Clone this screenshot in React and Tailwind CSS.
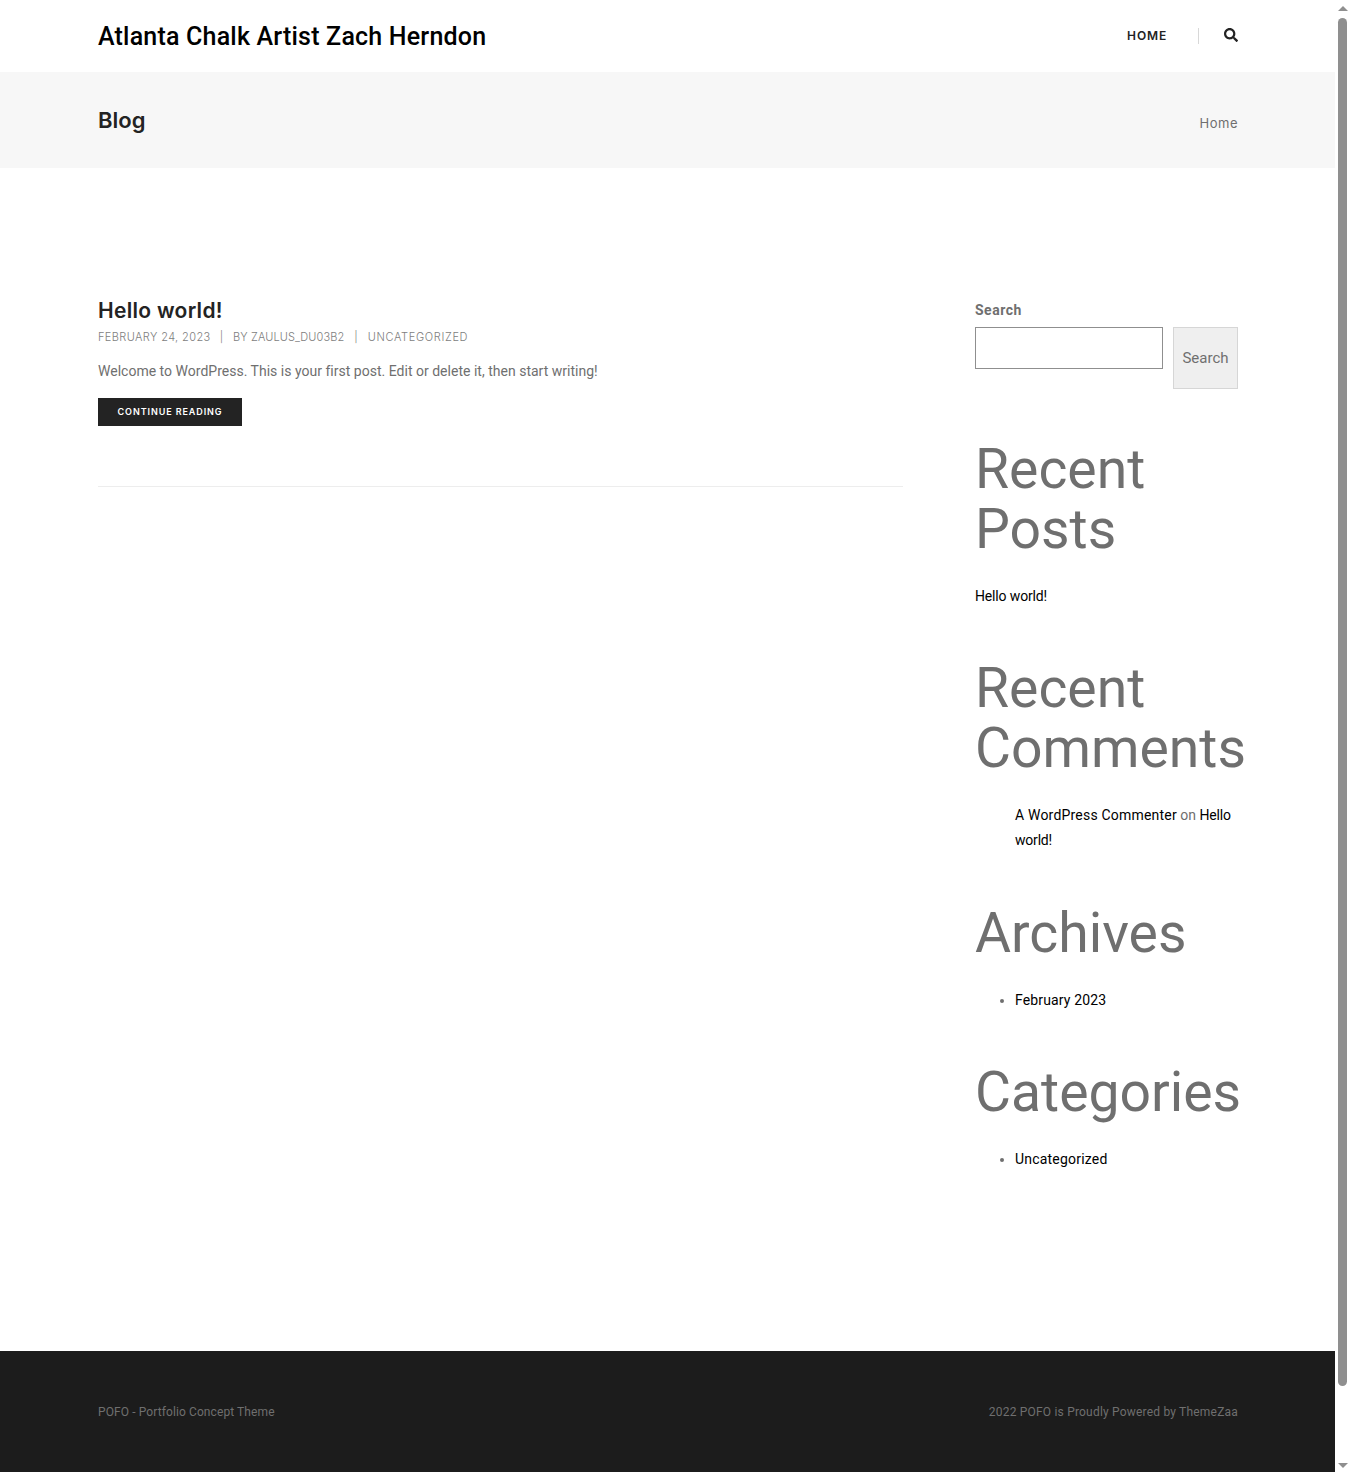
import React from 'react'
import { FaSearch } from 'react-icons/fa'

const WidgetTitle = ({ children, className = '' }) => (
  <h2 className={`text-[55.3px] leading-[60px] font-normal text-[#6f6f6f] ${className}`}>{children}</h2>
)

const Scrollbar = () => (
  <div className="w-[15px] shrink-0 bg-white flex flex-col items-center">
    <div className="mt-[6px] w-0 h-0 border-x-[5px] border-x-transparent border-b-[5px] border-b-[#8f8f8f]" />
    <div className="mt-[7px] w-[9px] h-[1368px] rounded-full bg-[#8f8f8f]" />
    <div className="mt-auto mb-[4px] w-0 h-0 border-x-[5px] border-x-transparent border-t-[5px] border-t-[#8f8f8f]" />
  </div>
)

const App = () => {
  return (
    <div className="flex h-[1472px] bg-white overflow-hidden text-[14px] text-[#6f6f6f] [font-family:Roboto,sans-serif]">
      <div className="flex-1 min-w-0 flex flex-col">
        {/* Header */}
        <header className="h-[72px] shrink-0 pl-[98px] pr-[97px] flex items-center justify-between">
          <div className="mt-[2px] text-[25px] leading-[32px] font-medium tracking-[0.2px] text-black">Atlanta Chalk Artist Zach Herndon</div>
          <div className="flex items-center">
            <span className="text-[12px] font-semibold text-[#232323] tracking-[0.85px] [font-family:Inter,sans-serif]">HOME</span>
            <span className="ml-[31px] mr-[25px] w-px h-[16px] bg-[#d8d8d8]" />
            <FaSearch className="w-[14px] h-[14px] text-[#232323] mb-[2px]" />
          </div>
        </header>

        {/* Page title */}
        <div className="h-[96px] shrink-0 pl-[98px] pr-[97px] bg-[#f7f7f7] flex items-center justify-between">
          <h1 className="text-[22px] font-semibold text-[#232323] [font-family:Inter,sans-serif]">Blog</h1>
          <span className="text-[13px] tracking-[0.5px] text-[#6f6f6f] mt-[7px] [font-family:Inter,sans-serif]">Home</span>
        </div>

        {/* Content */}
        <main className="flex-1 pl-[98px] pr-[97px] pt-[130px] flex justify-between">
          <div className="w-[805px]">
            <h2 className="text-[21px] leading-[26px] font-semibold tracking-[0.3px] text-[#232323] [font-family:Inter,sans-serif]">Hello world!</h2>
            <div className="mt-[3px] flex text-[11px] leading-[20px] font-light text-[#7d7d7d] [font-family:Inter,sans-serif]">
              <span className="tracking-[0.4px]">FEBRUARY 24, 2023</span>
              <span className="ml-[9px] mr-[10px]">|</span>
              <span className="tracking-[0.1px]">BY ZAULUS_DU03B2</span>
              <span className="mx-[10px]">|</span>
              <span className="tracking-[0.65px]">UNCATEGORIZED</span>
            </div>
            <p className="mt-[12px] leading-[25px] tracking-[0.012px]">Welcome to WordPress. This is your first post. Edit or delete it, then start writing!</p>
            <button className="mt-[14px] block w-[144px] h-[28px] bg-[#232323] text-white text-[9px] font-semibold tracking-[0.9px] [font-family:Inter,sans-serif]">CONTINUE READING</button>
            <div className="mt-[60px] h-px bg-[#ededed]" />
          </div>

          <aside className="w-[263px]">
            <div className="mt-[2px] text-[14px] leading-[20px] font-bold tracking-[0.5px] text-[#6f6f6f]">Search</div>
            <div className="mt-[7px] flex items-start">
              <input className="w-[188px] h-[42px] border border-[#8f8f8f] bg-white" />
              <button className="ml-[10px] w-[65px] h-[62px] border border-[#d6d6d6] bg-[#efefef] text-[15px] pt-[1px] text-[#6f6f6f]">Search</button>
            </div>

            <WidgetTitle className="mt-[51px]">Recent<br />Posts</WidgetTitle>
            <a className="mt-[24px] block leading-[25px] tracking-[-0.15px] text-black">Hello world!</a>

            <WidgetTitle className="mt-[50px]">Recent<br />Comments</WidgetTitle>
            <p className="mt-[24px] pl-[40px] leading-[25px]">
              <a className="text-black tracking-[0.2px]">A WordPress Commenter</a> on <a className="text-black tracking-[-0.2px]">Hello world!</a>
            </p>

            <WidgetTitle className="mt-[51px]">Archives</WidgetTitle>
            <ul className="mt-[24px] pl-[40px] list-disc leading-[25px] marker:text-[#6f6f6f]">
              <li><a className="text-black tracking-[0.15px]">February 2023</a></li>
            </ul>

            <WidgetTitle className="mt-[50px]">Categories</WidgetTitle>
            <ul className="mt-[24px] pl-[40px] list-disc leading-[25px] marker:text-[#6f6f6f]">
              <li><a className="text-black tracking-[0.2px]">Uncategorized</a></li>
            </ul>
          </aside>
        </main>

        {/* Footer */}
        <footer className="h-[121px] shrink-0 pl-[98px] pr-[97px] bg-[#1c1c1c] flex items-center justify-between text-[12px] text-[#6f6f6f]">
          <span className="tracking-[0.1px]">POFO - Portfolio Concept Theme</span>
          <span className="tracking-[0.2px]">2022 POFO is Proudly Powered by ThemeZaa</span>
        </footer>
      </div>
      <Scrollbar />
    </div>
  )
}

export default App
